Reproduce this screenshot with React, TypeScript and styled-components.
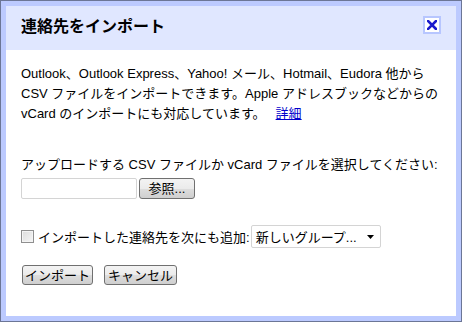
import React from "react";
import styled, { createGlobalStyle } from "styled-components";

const Global = createGlobalStyle`
  html, body { margin: 0; padding: 0; background: #fff; }
  body { font-family: Arial, "Liberation Sans", "Noto Sans CJK JP", sans-serif; }
`;

const FONT = `Arial, "Liberation Sans", "Noto Sans CJK JP", sans-serif`;

const Dialog = styled.div`
  width: 462px;
  height: 322px;
  box-sizing: border-box;
  border: 1px solid #6c7696;
  display: flex;
`;

const Frame = styled.div`
  flex: 1;
  border: 5px solid #bccaff;
  display: flex;
  flex-direction: column;
  background: #fff;
`;

const Header = styled.div`
  height: 44px;
  background: #e0e7ff;
  display: flex;
  align-items: flex-start;
  justify-content: space-between;
  padding: 0 15px;
`;

const Title = styled.h1`
  margin: 0;
  padding-top: 10px;
  font-family: ${FONT};
  font-size: 16px;
  font-weight: bold;
  line-height: 22px;
  color: #000;
`;

const Close = styled.button`
  margin-top: 10px;
  width: 18px;
  height: 18px;
  box-sizing: border-box;
  border: 2px solid #b7c6ff;
  background: #fff;
  padding: 0;
  display: flex;
  align-items: center;
  justify-content: center;
`;

const Body = styled.div`
  padding: 14px 15px 0 15px;
  font-family: ${FONT};
  font-size: 13px;
  color: #000;
`;

const Intro = styled.p`
  margin: 0;
  line-height: 20px;
  white-space: nowrap;
`;

const Link = styled.a`
  color: #0000cc;
  text-decoration: underline;
  margin-left: 10px;
`;

const Label = styled.div`
  margin-top: 31px;
  line-height: 20px;
  white-space: nowrap;
`;

const FileRow = styled.div`
  display: flex;
  gap: 2px;
  margin-top: 3px;
`;

const FileInput = styled.div`
  width: 116px;
  height: 21px;
  box-sizing: border-box;
  border: 1px solid #d4d4d4;
  border-radius: 2px;
  background: #fff;
`;

const Btn = styled.button<{ $w: number; $h: number }>`
  width: ${(p) => p.$w}px;
  height: ${(p) => p.$h}px;
  box-sizing: border-box;
  border: 1px solid #707070;
  border-radius: 3px;
  background: linear-gradient(#f3f3f3 0%, #ebebeb 50%, #dddddd 51%, #cfcfcf 100%);
  font-family: ${FONT};
  font-size: 13px;
  color: #000;
  padding: 0;
  line-height: 1;
  display: flex;
  align-items: center;
  justify-content: center;
`;

const CheckRow = styled.div`
  display: flex;
  align-items: center;
  margin-top: 26px;
  white-space: nowrap;
`;

const Check = styled.span`
  width: 13px;
  height: 13px;
  box-sizing: border-box;
  border: 1px solid #8f8f8f;
  background: linear-gradient(135deg, #dcdcdc, #f6f6f6);
  box-shadow: inset 0 0 0 1px #f4f4f4;
  margin-right: 4px;
`;

const Select = styled.div`
  width: 130px;
  height: 23px;
  box-sizing: border-box;
  border: 1px solid #d4d4d4;
  border-radius: 2px;
  background: #fff;
  display: flex;
  align-items: center;
  justify-content: space-between;
  padding: 0 6px 0 4px;
  margin-left: 1px;
`;

const Actions = styled.div`
  display: flex;
  gap: 11px;
  margin-top: 17px;
  margin-left: 1px;
`;

export default function App() {
  return (
    <>
      <Global />
      <Dialog>
        <Frame>
          <Header>
            <Title>連絡先をインポート</Title>
            <Close aria-label="close">
              <svg width="10" height="10" viewBox="0 0 10 10">
                <path d="M1 1 L9 9 M9 1 L1 9" stroke="#1a1acc" strokeWidth="2.6" strokeLinecap="square" />
              </svg>
            </Close>
          </Header>
          <Body>
            <Intro>
              Outlook、Outlook Express、Yahoo! メール、Hotmail、Eudora 他から
              <br />
              CSV ファイルをインポートできます。Apple アドレスブックなどからの
              <br />
              vCard のインポートにも対応しています。
              <Link href="#">詳細</Link>
            </Intro>
            <Label>アップロードする CSV ファイルか vCard ファイルを選択してください:</Label>
            <FileRow>
              <FileInput />
              <Btn $w={56} $h={21}>参照...</Btn>
            </FileRow>
            <CheckRow>
              <Check />
              <span>インポートした連絡先を次にも追加:</span>
              <Select>
                <span>新しいグループ...</span>
                <svg width="7" height="4" viewBox="0 0 7 4">
                  <path d="M0 0 H7 L3.5 4 Z" fill="#000" />
                </svg>
              </Select>
            </CheckRow>
            <Actions>
              <Btn $w={71} $h={20}>インポート</Btn>
              <Btn $w={73} $h={20}>キャンセル</Btn>
            </Actions>
          </Body>
        </Frame>
      </Dialog>
    </>
  );
}
